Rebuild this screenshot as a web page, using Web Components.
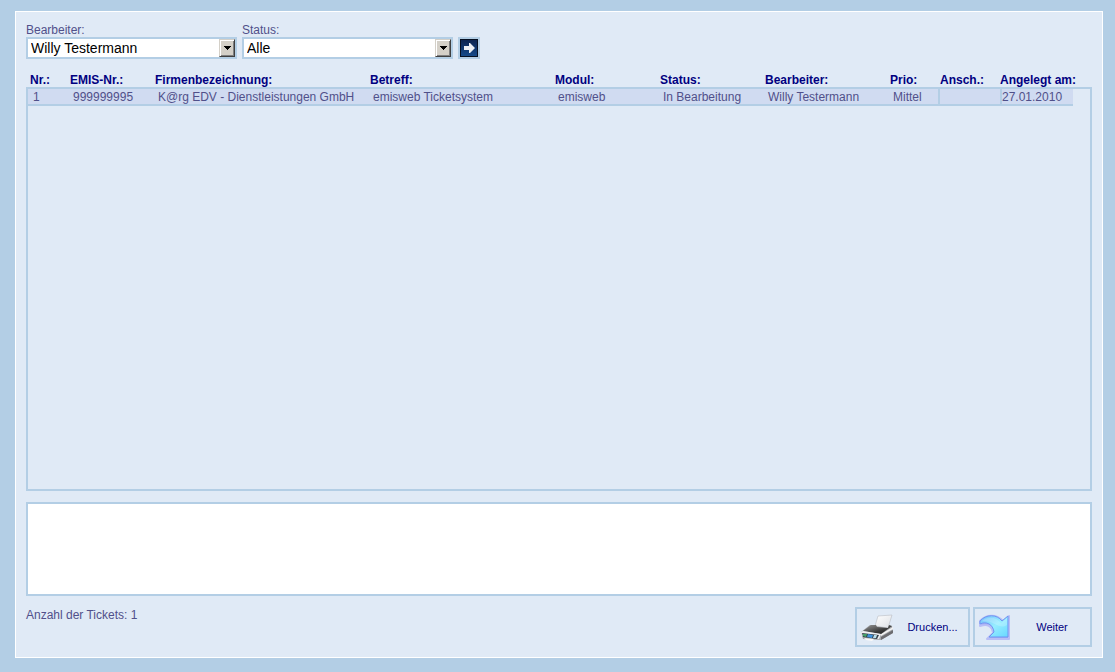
<!DOCTYPE html>
<html lang="de">
<head>
<meta charset="utf-8">
<title>Ticketsystem</title>
<style>
  :root {
    --line: #b3cee5;
    --panel: #e0eaf6;
    --row: #d0dbf1;
    --text: #50508a;
    --strong: #000080;
  }
  html { height: 100%; }
  body {
    margin: 0;
    min-height: 100%;
    display: flex;
    background: var(--line);
    color: var(--text);
    font: 12px/14px "Liberation Sans", Arial, sans-serif;
  }
</style>
</head>
<body>
<ticket-app></ticket-app>

<script>
class ShadowElement extends HTMLElement {
  connectedCallback() {
    if (this.shadowRoot) return;
    this.attachShadow({ mode: 'open' }).innerHTML = this.render();
  }
}

customElements.define('select-field', class extends ShadowElement {
  render() {
    return `
      <style>
        :host { display: flex; flex-direction: column; width: 211px; }
        .control { display: grid; }
        select {
          grid-area: 1 / 1;
          appearance: none;
          box-sizing: border-box;
          width: 100%;
          height: 22px;
          margin: 0;
          padding: 0 20px 0 3px;
          border: 2px solid var(--line);
          border-radius: 0;
          background: #fff;
          color: #000;
          font: 14px/18px "Liberation Sans", Arial, sans-serif;
        }
        .arrow {
          grid-area: 1 / 1;
          justify-self: end;
          align-self: center;
          box-sizing: border-box;
          width: 16px;
          height: 18px;
          margin-right: 2px;
          display: grid;
          place-items: center;
          background: #d4d0c8;
          border: 1px solid;
          border-color: #d4d0c8 #404040 #404040 #d4d0c8;
          box-shadow: inset 1px 1px #fff, inset -1px -1px #808080;
          pointer-events: none;
          z-index: 1;
        }
      </style>
      <label for="field">${this.getAttribute('label')}</label>
      <div class="control">
        <select id="field"><option>${this.getAttribute('value')}</option></select>
        <span class="arrow"><svg width="7" height="4" viewBox="0 0 7 4" shape-rendering="crispEdges"><path d="M0 0H7V1H6V2H5V3H4V4H3V3H2V2H1V1H0Z"/></svg></span>
      </div>`;
  }
});

customElements.define('go-button', class extends ShadowElement {
  render() {
    return `
      <style>
        :host { display: block; }
        button { display: block; width: 22px; height: 22px; padding: 0; border: 2px solid var(--line); background: #0b2c5f; }
        svg { display: block; }
      </style>
      <button type="button" aria-label="Suchen">
        <svg width="18" height="18" viewBox="0 0 18 18">
          <defs><linearGradient id="g" x1="0" y1="0" x2="0" y2="1"><stop offset="0" stop-color="#0c2450"/><stop offset="1" stop-color="#154a8a"/></linearGradient></defs>
          <rect width="18" height="18" fill="#051022"/>
          <rect x="1" y="1" width="16" height="16" fill="url(#g)"/>
          <path d="M4 7H9V4L10 4L15 9L10 14H9V11H4Z" fill="#ecf0f4"/>
        </svg>
      </button>`;
  }
});

customElements.define('ticket-table', class extends ShadowElement {
  render() {
    const columns = [
      ['Nr.:', '1'], ['EMIS-Nr.:', '999999995'],
      ['Firmenbezeichnung:', 'K@rg EDV - Dienstleistungen GmbH'],
      ['Betreff:', 'emisweb Ticketsystem'], ['Modul:', 'emisweb'],
      ['Status:', 'In Bearbeitung'], ['Bearbeiter:', 'Willy Testermann'],
      ['Prio:', 'Mittel'], ['Ansch.:', ''], ['Angelegt am:', '27.01.2010']
    ];
    const widths = [40, 85, 0, 185, 105, 105, 125, 50, 62, 73];
    return `
      <style>
        :host { display: grid; grid-template-rows: 15px 1fr; }
        .frame { grid-area: 2 / 1; border: 2px solid var(--line); }
        table {
          grid-area: 1 / 1 / 3 / 2;
          align-self: start;
          width: calc(100% - 21px);
          margin-left: 2px;
          table-layout: fixed;
          border-collapse: separate;
          border-spacing: 0;
          text-align: left;
          white-space: nowrap;
        }
        th { height: 17px; padding: 0 0 0 2px; color: var(--strong); line-height: 17px; vertical-align: top; }
        th:last-child { padding-left: 0; }
        td { height: 13px; padding: 2px 0 0 5px; background: var(--row); border-bottom: 2px solid var(--line); line-height: 13px; }
        td:nth-last-child(-n+2) { padding-left: 0; border-left: 2px solid var(--line); }
      </style>
      <div class="frame"></div>
      <table>
        <colgroup>${widths.map(w => w ? `<col style="width:${w}px">` : '<col>').join('')}</colgroup>
        <thead><tr>${columns.map(c => `<th scope="col">${c[0]}</th>`).join('')}</tr></thead>
        <tbody><tr>${columns.map(c => `<td>${c[1]}</td>`).join('')}</tr></tbody>
      </table>`;
  }
});

customElements.define('action-button', class extends ShadowElement {
  render() {
    return `
      <style>
        :host { display: flex; }
        button {
          flex: 1;
          display: flex;
          align-items: center;
          height: 40px;
          padding: 0 4px;
          border: 2px solid var(--line);
          background: var(--panel);
          color: var(--strong);
          font: 11px/14px "Liberation Sans", Arial, sans-serif;
        }
        .text { flex: 1; text-align: center; padding-left: 6px; }
      </style>
      <button type="button"><slot name="icon"></slot><span class="text"><slot></slot></span></button>`;
  }
});

customElements.define('ticket-app', class extends ShadowElement {
  render() {
    return `
      <style>
        :host {
          flex: 1;
          display: flex;
          flex-direction: column;
          box-sizing: border-box;
          margin: 11px 12px 14px 15px;
          padding: 11px 10px 10px;
          border: 1px solid #fff;
          background: var(--panel);
        }
        .filters { display: flex; align-items: flex-end; gap: 5px; }
        ticket-table { flex: 1; margin-top: 13px; }
        textarea {
          box-sizing: border-box;
          display: block;
          width: 100%;
          height: 94px;
          margin: 11px 0;
          padding: 2px;
          border: 2px solid var(--line);
          background: #fff;
          resize: none;
          font: inherit;
        }
        footer { display: flex; gap: 3px; }
        .count { flex: 1; margin-top: 1px; }
        .print { width: 115px; }
        .next { width: 119px; }
        svg { display: block; }
      </style>
      <div class="filters">
        <select-field label="Bearbeiter:" value="Willy Testermann"></select-field>
        <select-field label="Status:" value="Alle"></select-field>
        <go-button></go-button>
      </div>
      <ticket-table></ticket-table>
      <textarea aria-label="Beschreibung"></textarea>
      <footer>
        <span class="count">Anzahl der Tickets: 1</span>
        <action-button class="print">
          <svg slot="icon" width="34" height="28" viewBox="0 0 34 28">
            <defs>
              <linearGradient id="paper" x1="0" y1="0" x2="1" y2="1"><stop offset="0" stop-color="#fff"/><stop offset="1" stop-color="#dcdfe4"/></linearGradient>
              <linearGradient id="lid" x1="0" y1="0" x2="1" y2="1"><stop offset="0" stop-color="#9a9a9a"/><stop offset=".6" stop-color="#3c3c3c"/><stop offset="1" stop-color="#181818"/></linearGradient>
            </defs>
            <path d="M0 19L9 12L31 13L32 20L20 27L2 26Z" fill="#a4a6aa"/>
            <path d="M20 21L32 14V16L20 23Z" fill="#f2f2f2"/>
            <path d="M20 24L32 17V20L20 27Z" fill="#6c6c70"/>
            <path d="M14 13L17 3L31 2L27 15Z" fill="url(#paper)" stroke="#b8bcc2" stroke-width=".6"/>
            <path d="M2 18L10 12L15 12L16 14L27 15L28 12L31 13L20 21Z" fill="url(#lid)"/>
            <path d="M0 19L2 18L20 21L18 26L1 23Z" fill="#f0f1f3"/>
            <path d="M1 20L18 22L16 26L2 24Z" fill="#343f49"/>
            <path d="M2 21L6 21L5 24L2 23Z" fill="#46a069"/>
            <path d="M7 21L12 22L11 25L6 24Z" fill="#3f91db"/>
            <path d="M13 22L16 22L15 25L12 25Z" fill="#b9ddea"/>
            <path d="M3 25L13 26L11 28L5 27Z" fill="#f9f9f9"/>
          </svg>Drucken...
        </action-button>
        <action-button class="next">
          <svg slot="icon" width="33" height="28" viewBox="0 0 33 28">
            <defs><linearGradient id="blue" x1="0" y1="0" x2="1" y2="1"><stop offset="0" stop-color="#75bdfb"/><stop offset=".5" stop-color="#96edff"/><stop offset="1" stop-color="#67d7ff"/></linearGradient></defs>
            <path d="M1 8C7 1 18 1 24 8L30 3V26H8L14 20C13 12 8 11 1 13Z" fill="#a7adf5" stroke="#b8bef6" stroke-width="2" stroke-linejoin="round"/>
            <path d="M1 8C7 1 18 1 23 8L29 3V24H10L15 19C14 11 7 8 1 11Z" fill="url(#blue)" stroke="#6f95f2"/>
            <path d="M3 8C9 3 17 4 22 10L28 5V12C20 17 17 8 3 8Z" fill="#fff" opacity=".2"/>
          </svg>Weiter
        </action-button>
      </footer>`;
  }
});
</script>
</body>
</html>
